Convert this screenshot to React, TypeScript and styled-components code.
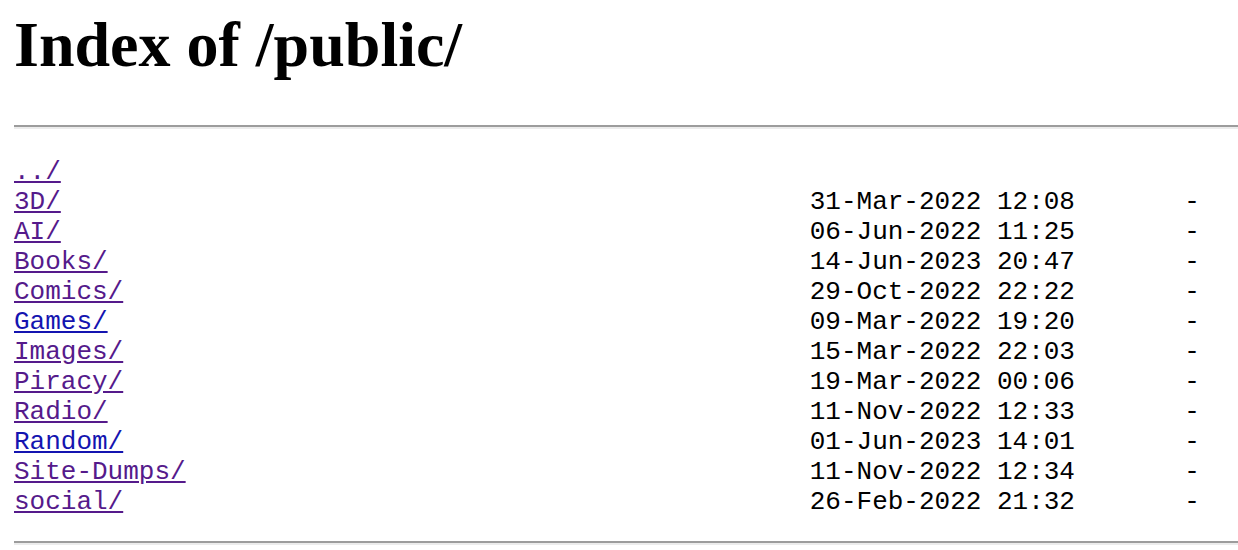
import React from 'react';
import styled, { createGlobalStyle } from 'styled-components';

interface Entry {
  name: string;
  date?: string;
  size?: string;
  visited?: boolean;
}

const entries: Entry[] = [
  { name: '../', visited: true },
  { name: '3D/', date: '31-Mar-2022 12:08', size: '-', visited: true },
  { name: 'AI/', date: '06-Jun-2022 11:25', size: '-', visited: true },
  { name: 'Books/', date: '14-Jun-2023 20:47', size: '-', visited: true },
  { name: 'Comics/', date: '29-Oct-2022 22:22', size: '-', visited: true },
  { name: 'Games/', date: '09-Mar-2022 19:20', size: '-', visited: false },
  { name: 'Images/', date: '15-Mar-2022 22:03', size: '-', visited: true },
  { name: 'Piracy/', date: '19-Mar-2022 00:06', size: '-', visited: true },
  { name: 'Radio/', date: '11-Nov-2022 12:33', size: '-', visited: true },
  { name: 'Random/', date: '01-Jun-2023 14:01', size: '-', visited: false },
  { name: 'Site-Dumps/', date: '11-Nov-2022 12:34', size: '-', visited: true },
  { name: 'social/', date: '26-Feb-2022 21:32', size: '-', visited: true },
];

const GlobalStyle = createGlobalStyle`
  html, body {
    margin: 0;
    padding: 0;
    background: #ffffff;
  }
  body {
    padding-left: 14px;
    overflow: hidden;
  }
`;

const App: React.FC = () => {
  return (
    <>
      <GlobalStyle />
      <Title>Index of /public/</Title>
      <Rule />
      <Listing>
        {entries.map((e) => (
          <Row key={e.name}>
            <Name href="#" $visited={e.visited}>
              {e.name}
            </Name>
            <Stamp>{e.date}</Stamp>
            <Size>{e.size}</Size>
          </Row>
        ))}
      </Listing>
      <Rule />
    </>
  );
};

const Title = styled.h1`
  font-family: 'Liberation Serif', 'Times New Roman', serif;
  font-size: 64px;
  font-weight: 700;
  line-height: 73.6px;
  color: #000;
  margin: 8px 0 43px 0;
`;

const Rule = styled.hr`
  margin: 0;
  height: 0;
  border: none;
  border-top: 2px solid #9c9c9c;
  border-bottom: 2px solid #ececec;
`;

const Listing = styled.div`
  font-family: 'Liberation Mono', 'Courier New', monospace;
  font-size: 26px;
  line-height: 30px;
  color: #000;
  margin: 28px 0 24px 0;
  display: flex;
  flex-direction: column;
`;

const Row = styled.div`
  display: grid;
  grid-template-columns: 51ch 17ch 8ch;
  white-space: pre;
`;

const Name = styled.a<{ $visited?: boolean }>`
  justify-self: start;
  color: ${(p) => (p.$visited ? '#551a8b' : '#1414b0')};
  text-decoration: underline;
`;

const Stamp = styled.span``;

const Size = styled.span`
  text-align: right;
`;

export default App;
